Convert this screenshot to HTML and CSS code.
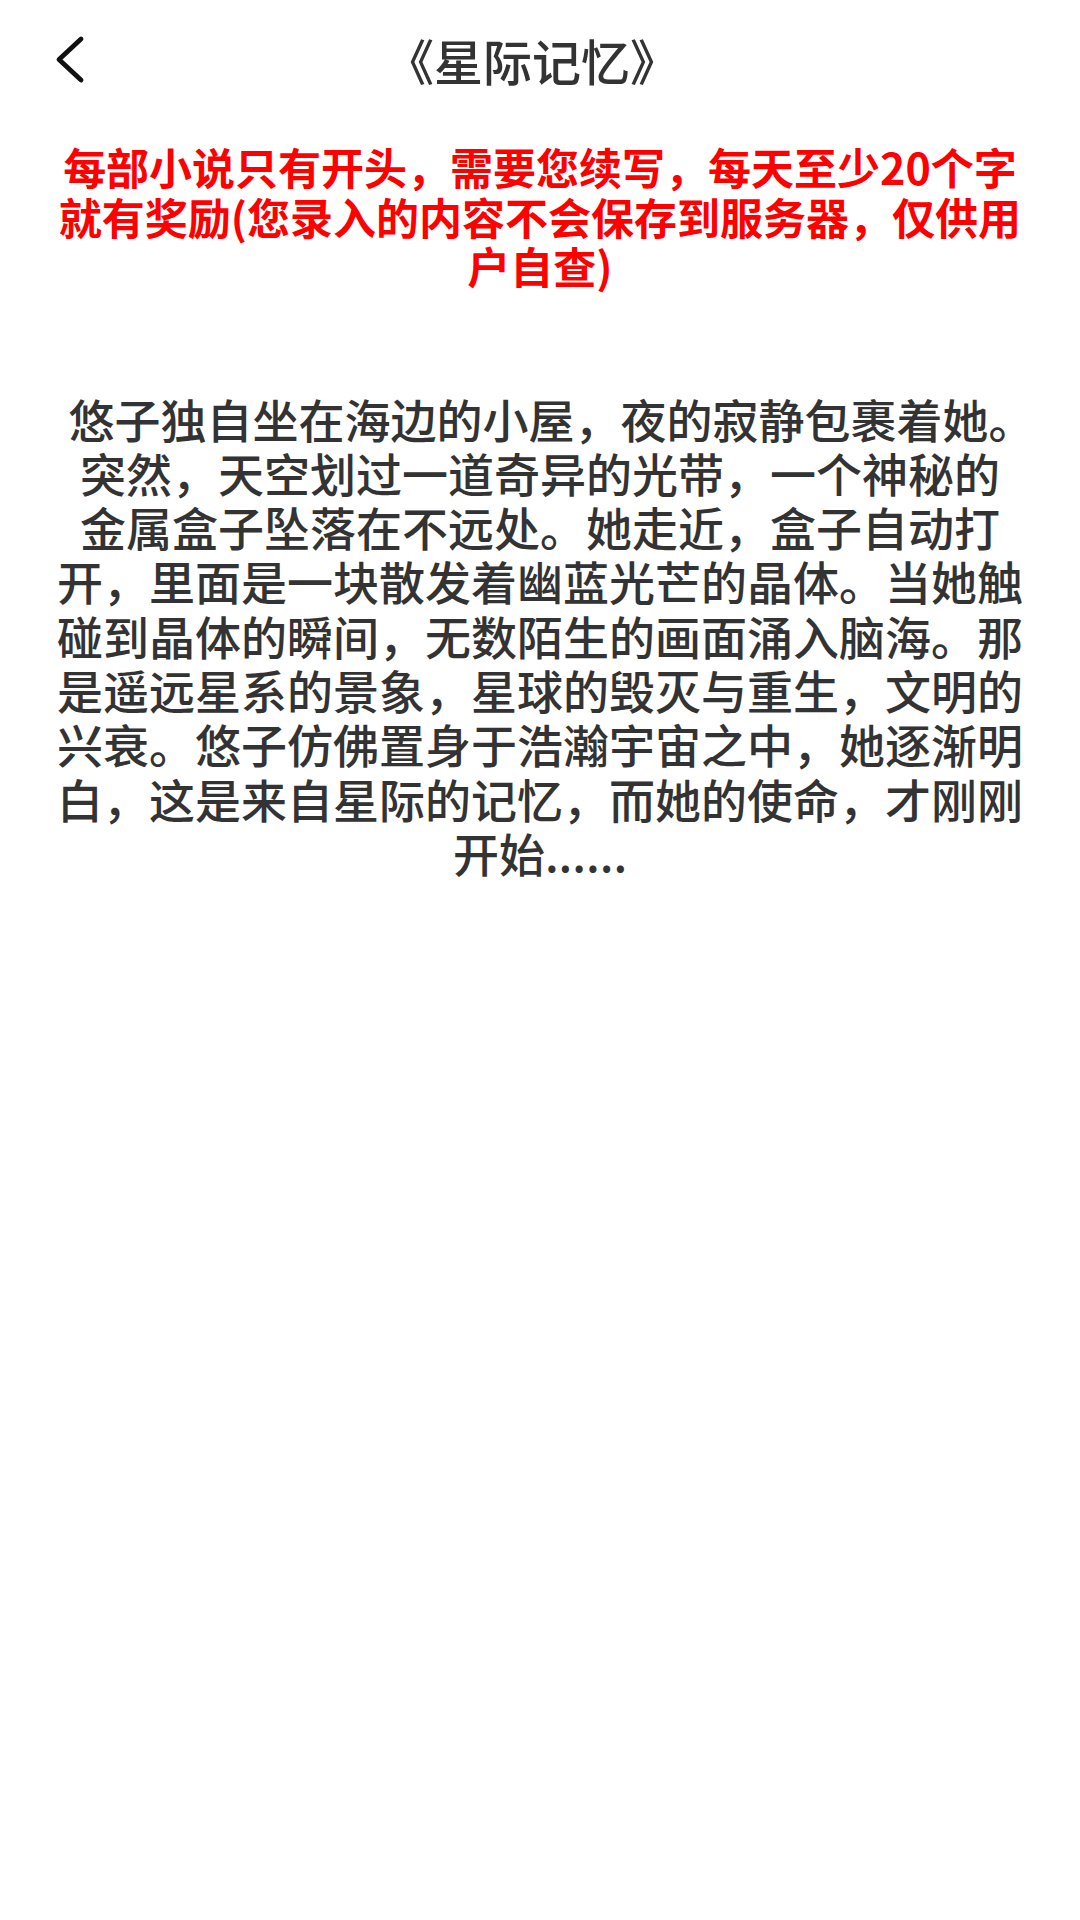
FILE: index.html
```html
<!DOCTYPE html>
<html lang="zh-CN">
<head>
<meta charset="utf-8">
<title>《星际记忆》</title>
<link rel="stylesheet" href="styles.css">
</head>
<body>
<div class="page">
  <header class="header">
    <div class="back">
      <svg class="back-icon" width="40" height="60" viewBox="0 0 40 60">
        <path d="M31 9 L9 29.5 L31 50" fill="none" stroke="#111" stroke-width="4.8" stroke-linecap="round" stroke-linejoin="round"/>
      </svg>
    </div>
    <h1 class="title">《星际记忆》</h1>
    <div class="spacer"></div>
  </header>
  <p class="notice">每部小说只有开头，需要您续写，每天至少20个字<br>就有奖励(您录入的内容不会保存到服务器，仅供用<br>户自查)</p>
  <p class="story">悠子独自坐在海边的小屋，夜的寂静包裹着她<span class="hang">。</span><br>突然，天空划过一道奇异的光带，一个神秘的<br>金属盒子坠落在不远处。她走近，盒子自动打<br>开，里面是一块散发着幽蓝光芒的晶体。当她触<br>碰到晶体的瞬间，无数陌生的画面涌入脑海。那<br>是遥远星系的景象，星球的毁灭与重生，文明的<br>兴衰。悠子仿佛置身于浩瀚宇宙之中，她逐渐明<br>白，这是来自星际的记忆，而她的使命，才刚刚<br>开始......</p>
</div>
</body>
</html>
```

FILE: styles.css
```css
html, body {
  margin: 0;
  padding: 0;
  background: #ffffff;
}

body {
  font-family: "Noto Sans CJK SC", "Noto Sans", sans-serif;
  width: 1080px;
  min-height: 1920px;
}

.page {
  display: flex;
  flex-direction: column;
}

.header {
  height: 120px;
  display: grid;
  grid-template-columns: 120px 1fr 120px;
  align-items: center;
}

.back {
  display: flex;
  align-items: center;
  padding-left: 50px;
}

.back-icon {
  display: block;
}

.title {
  margin: 0;
  padding-right: 16px;
  text-align: center;
  font-size: 49px;
  font-weight: 500;
  line-height: 60px;
  color: #333333;
  white-space: nowrap;
}

.notice {
  margin: 22px 0 0;
  padding: 0 30px;
  text-align: center;
  font-size: 43px;
  font-weight: 700;
  line-height: 49.5px;
  color: #ff0000;
  white-space: nowrap;
}

.story {
  margin: 100px 0 0;
  padding: 0 30px;
  text-align: center;
  font-size: 46px;
  font-weight: 500;
  line-height: 54.3px;
  color: #333333;
  white-space: nowrap;
}

.hang {
  letter-spacing: -23px;
}
```
